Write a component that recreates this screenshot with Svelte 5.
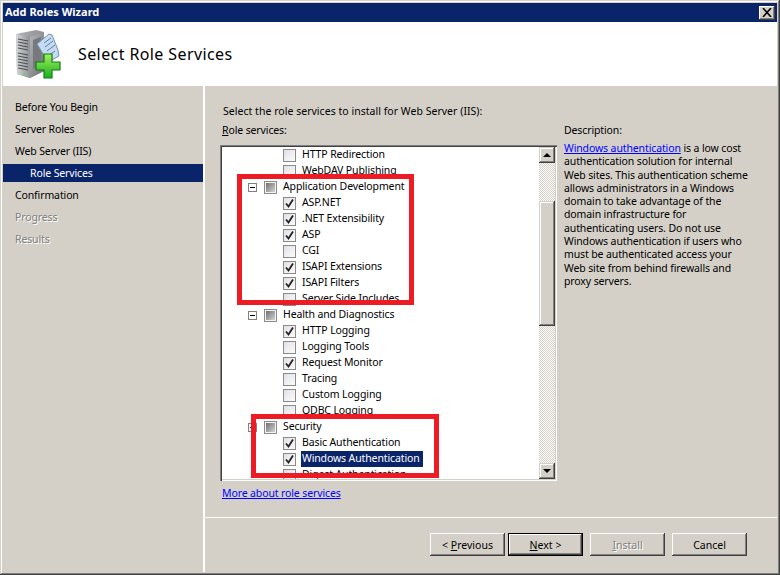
<script>
	const steps = [
		{ label: 'Before You Begin' },
		{ label: 'Server Roles' },
		{ label: 'Web Server (IIS)' },
		{ label: 'Role Services', active: true },
		{ label: 'Confirmation' },
		{ label: 'Progress', disabled: true },
		{ label: 'Results', disabled: true }
	];

	const services = [
		{ label: 'HTTP Redirection' },
		{ label: 'WebDAV Publishing' },
		{ label: 'Application Development', parent: true },
		{ label: 'ASP.NET', checked: true },
		{ label: '.NET Extensibility', checked: true },
		{ label: 'ASP', checked: true },
		{ label: 'CGI' },
		{ label: 'ISAPI Extensions', checked: true },
		{ label: 'ISAPI Filters', checked: true },
		{ label: 'Server Side Includes' },
		{ label: 'Health and Diagnostics', parent: true },
		{ label: 'HTTP Logging', checked: true },
		{ label: 'Logging Tools' },
		{ label: 'Request Monitor', checked: true },
		{ label: 'Tracing' },
		{ label: 'Custom Logging' },
		{ label: 'ODBC Logging' },
		{ label: 'Security', parent: true },
		{ label: 'Basic Authentication', checked: true },
		{ label: 'Windows Authentication', checked: true, selected: true },
		{ label: 'Digest Authentication' }
	];
</script>

<div class="window">
	<div class="titlebar">
		<span>Add Roles Wizard</span>
		<button class="close" aria-label="Close">
			<svg width="10" height="9" viewBox="0 0 10 9">
				<path d="M1 0l8 9M9 0L1 9" fill="none" stroke="#000" stroke-width="1.6" />
			</svg>
		</button>
	</div>

	<header class="banner">
		<svg class="wizard-icon" width="48" height="52" viewBox="0 0 48 52">
			<defs>
				<linearGradient id="tower" x1="0" x2="1" y1="0" y2="0">
					<stop offset="0" stop-color="#d6d8da" />
					<stop offset="1" stop-color="#8f9296" />
				</linearGradient>
				<linearGradient id="side" x1="0" x2="1" y1="0" y2="1">
					<stop offset="0" stop-color="#b4b6b8" />
					<stop offset="1" stop-color="#6a6c70" />
				</linearGradient>
				<linearGradient id="plus" x1="0" x2="0" y1="0" y2="1">
					<stop offset="0" stop-color="#a4ee5c" />
					<stop offset="1" stop-color="#18b020" />
				</linearGradient>
			</defs>
			<path d="M1 5L21 1l8 2v39l-14 7-13-4z" fill="url(#side)" />
			<path d="M1 5l14 3v41l-13-4z" fill="url(#tower)" />
			<path d="M15 8l14-5v39l-14 7z" fill="url(#side)" />
			<path d="M18 11l8-3v28l-8 4z" fill="#77797c" />
			<path d="M3 10l10 2M3 13l10 2M3 16l10 2M3 19l10 2M3 24l10 2M3 27l10 2M3 30l10 2M3 33l10 2M3 36l10 2M3 39l10 2" stroke="#4c5054" stroke-width="1.2" />
			<rect x="8" y="44" width="2" height="2" fill="#58e040" />
			<path d="M22 15L34 5l3 1 6 15 1 6-9 5-5-4z" fill="#c4dbf2" stroke="#7292b4" />
			<path d="M29 14l7-5M30 18l8-6M32 22l8-6M34 26l6-4" stroke="#5e7ea6" stroke-width="1" />
			<path d="M29 25h8v8h8v8h-8v8h-8v-8h-8v-8h8z" fill="url(#plus)" stroke="#0e7f16" stroke-width="1.2" />
		</svg>
		<h1>Select Role Services</h1>
	</header>

	<div class="body">
		<nav class="steps">
			{#each steps as step}
				<div class="step" class:active={step.active} class:disabled={step.disabled}>{step.label}</div>
			{/each}
		</nav>

		<main class="main">
			<div class="content">
				<div class="left">
					<p class="intro">Select the role services to install for Web Server (IIS):</p>
					<div class="caption"><u>R</u>ole services:</div>
					<div class="list">
						<div class="tree">
							{#each services as item}
								<div class="row" class:parent={item.parent}>
									{#if item.parent}
										<span class="expander"></span>
										<span class="box mixed"></span>
									{:else}
										<span class="box">
											{#if item.checked}
												<svg width="11" height="11" viewBox="0 0 11 11">
													<path d="M2 5.500l2.500 3L9 1.500" fill="none" stroke="#222" stroke-width="1.800" />
												</svg>
											{/if}
										</span>
									{/if}
									<span class="label" class:selected={item.selected}><span class="text">{item.label}</span></span>
								</div>
							{/each}
						</div>
						<div class="scrollbar">
							<button class="arrow" aria-label="Scroll up"><i class="up"></i></button>
							<div class="track">
								<div class="thumb"></div>
							</div>
							<button class="arrow" aria-label="Scroll down"><i class="down"></i></button>
						</div>
					</div>
					<a class="more" href="#more">More about role services</a>
				</div>
				<aside class="description">
					<div class="caption">Description:</div>
					<p>
						<a href="#auth">Windows authentication</a> is a low cost<br />
						authentication solution for internal<br />
						Web sites. This authentication scheme<br />
						allows administrators in a Windows<br />
						domain to take advantage of the<br />
						domain infrastructure for<br />
						authenticating users. Do not use<br />
						Windows authentication if users who<br />
						must be authenticated access your<br />
						Web site from behind firewalls and<br />
						proxy servers.
					</p>
				</aside>
			</div>
			<footer class="footer">
				<button class="btn prev"><span>&lt; <u>P</u>revious</span></button>
				<button class="btn next"><span><u>N</u>ext &gt;</span></button>
				<button class="btn install" disabled><span><u>I</u>nstall</span></button>
				<button class="btn"><span>Cancel</span></button>
			</footer>
		</main>
	</div>

	<div class="mark mark-dev"></div>
	<div class="mark mark-sec"></div>
</div>

<style>
	:global(body) {
		margin: 0;
		background: #d4d0c8;
	}

	.window {
		position: relative;
		box-sizing: border-box;
		width: 780px;
		height: 575px;
		padding: 3px;
		display: flex;
		flex-direction: column;
		overflow: hidden;
		background: #d4d0c8;
		box-shadow: inset -1px -1px 0 #404040, inset 1px 1px 0 #d4d0c8, inset -2px -2px 0 #808080, inset 2px 2px 0 #fff;
		font: 10.500px/13px "Noto Sans", sans-serif;
		letter-spacing: -0.12px;
		color: #000;
	}

	.titlebar {
		height: 19px;
		box-sizing: border-box;
		flex: none;
		display: flex;
		align-items: center;
		justify-content: space-between;
		padding: 0 2px;
		background: #0a246a;
		color: #fff;
		font-weight: bold;
		font-size: 11px;
		letter-spacing: 0;
	}

	.titlebar span {
		margin-top: -2px;
	}

	.close {
		width: 16px;
		height: 14px;
		padding: 0;
		display: flex;
		align-items: center;
		justify-content: center;
		border: 0;
		background: #d4d0c8;
		box-shadow: inset -1px -1px 0 #404040, inset 1px 1px 0 #fff, inset -2px -2px 0 #808080;
	}

	.banner {
		height: 64px;
		flex: none;
		display: flex;
		align-items: center;
		background: #fff;
		border-top: 1px solid #fff;
		box-sizing: border-box;
	}

	.wizard-icon {
		margin-left: 12px;
		flex: none;
	}

	h1 {
		margin: -2px 0 0 15px;
		font-size: 16px;
		letter-spacing: 0.4px;
		font-weight: normal;
		line-height: 20px;
	}

	.body {
		flex: 1;
		display: flex;
		min-height: 0;
	}

	.steps {
		box-sizing: content-box;
		width: 200px;
		flex: none;
		padding-top: 12px;
		border-right: 2px solid #fff;
	}

	.step {
		height: 18px;
		margin-bottom: 4px;
		padding-left: 12px;
		line-height: 18px;
	}

	.step.active {
		padding-left: 27px;
		background: #0a246a;
		color: #fff;
	}

	.step.disabled {
		color: #808080;
		text-shadow: 1px 1px 0 #fff;
	}

	.main {
		flex: 1;
		display: flex;
		flex-direction: column;
		min-width: 0;
	}

	.content {
		height: 432px;
		flex: none;
		box-sizing: border-box;
		display: flex;
		padding: 18px 0 0 15px;
		border-bottom: 1px solid #fff;
	}

	.left {
		width: 342px;
		flex: none;
	}

	.intro {
		margin: 0 0 5px 3px;
		line-height: 14px;
		letter-spacing: 0.03px;
	}

	.caption {
		margin-left: 2px;
		line-height: 14px;
	}

	.list {
		box-sizing: border-box;
		width: 337px;
		height: 336px;
		margin-top: 8px;
		display: flex;
		padding: 2px;
		background: #fff;
		box-shadow: inset 1px 1px 0 #808080, inset 2px 2px 0 #404040, inset -1px -1px 0 #fff, inset -2px -2px 0 #d4d0c8;
	}

	.tree {
		flex: 1;
		overflow: hidden;
	}

	.row {
		height: 16px;
		display: flex;
		align-items: center;
		padding-left: 61px;
		white-space: nowrap;
	}

	.row.parent {
		padding-left: 26px;
	}

	.expander {
		position: relative;
		box-sizing: border-box;
		width: 9px;
		height: 9px;
		margin-right: 7px;
		flex: none;
		background: #fff;
		border: 1px solid #808080;
	}

	.expander::after {
		content: '';
		position: absolute;
		left: 1px;
		top: 3px;
		width: 5px;
		height: 1px;
		background: #000;
	}

	.box {
		box-sizing: border-box;
		width: 13px;
		height: 13px;
		flex: none;
		display: flex;
		align-items: center;
		justify-content: center;
		border: 1px solid #8a8a8a;
		background: linear-gradient(135deg, #e2e0e6, #fbfbfb);
	}

	.box.mixed {
		background: #f4f4f4;
	}

	.box.mixed::after {
		content: '';
		width: 9px;
		height: 9px;
		background: linear-gradient(135deg, #6f6f6f, #d4d4d4);
	}

	.label {
		height: 16px;
		margin-left: 5px;
		padding: 0 3px 0 1px;
		line-height: 16px;
	}

	.text {
		display: block;
		margin-top: -1px;
	}

	.label.selected {
		background: #0a246a;
		color: #fff;
	}

	.scrollbar {
		width: 16px;
		flex: none;
		display: flex;
		flex-direction: column;
	}

	.arrow {
		width: 16px;
		height: 16px;
		flex: none;
		padding: 0;
		display: flex;
		align-items: center;
		justify-content: center;
		border: 0;
		background: #d4d0c8;
		box-shadow: inset -1px -1px 0 #404040, inset 1px 1px 0 #d4d0c8, inset -2px -2px 0 #808080, inset 2px 2px 0 #fff;
	}

	.arrow i {
		width: 0;
		height: 0;
		border-left: 4px solid transparent;
		border-right: 4px solid transparent;
	}

	.arrow .up {
		border-bottom: 4px solid #000;
	}

	.arrow .down {
		border-top: 4px solid #000;
	}

	.track {
		flex: 1;
		padding-top: 38px;
		background: repeating-conic-gradient(#fff 0 25%, #d4d0c8 0 50%) 0 0 / 2px 2px;
	}

	.thumb {
		height: 125px;
		background: #d4d0c8;
		box-shadow: inset -1px -1px 0 #404040, inset 1px 1px 0 #d4d0c8, inset -2px -2px 0 #808080, inset 2px 2px 0 #fff;
	}

	a {
		color: #00f;
		text-decoration: underline;
	}

	.more {
		display: block;
		margin: 6px 0 0 2px;
	}

	.description {
		padding-top: 19px;
	}

	.description p {
		margin: 5px 0 0 2px;
		line-height: 13.300px;
		white-space: nowrap;
	}

	.footer {
		flex: 1;
		display: flex;
		align-items: flex-start;
		padding: 15px 30px 0 0;
		justify-content: flex-end;
	}

	.btn {
		box-sizing: border-box;
		width: 75px;
		height: 23px;
		margin-left: 7px;
		padding: 2px 0 0;
		border: 0;
		background: #d4d0c8;
		font: inherit;
		color: #000;
		box-shadow: inset -1px -1px 0 #404040, inset 1px 1px 0 #fff, inset -2px -2px 0 #808080;
	}

	.btn.next {
		margin-left: 3px;
		box-shadow: inset 0 0 0 1px #000, inset -2px -2px 0 #404040, inset 2px 2px 0 #fff, inset -3px -3px 0 #808080;
	}

	.btn.install {
		color: #808080;
		text-shadow: 1px 1px 0 #fff;
	}

	.mark {
		position: absolute;
		box-sizing: border-box;
		border: 5px solid #ed1c24;
		pointer-events: none;
	}

	.mark-dev {
		left: 237px;
		top: 174px;
		width: 177px;
		height: 131px;
	}

	.mark-sec {
		left: 251px;
		top: 414px;
		width: 188px;
		height: 64px;
	}
</style>
